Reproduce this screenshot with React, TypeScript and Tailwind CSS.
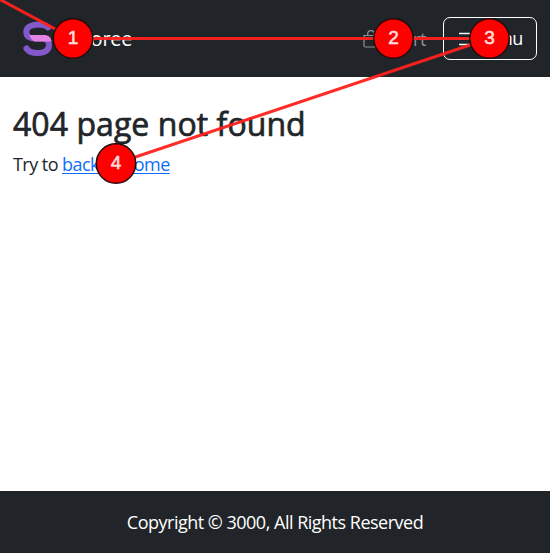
const stops = [
  { n: 1, x: 73, y: 38.5 },
  { n: 2, x: 393.5, y: 38.5 },
  { n: 3, x: 489.5, y: 38.5 },
  { n: 4, x: 116, y: 163.5 },
];

function Logo() {
  return (
    <svg width="32" height="36" viewBox="0 0 32 36" fill="none" className="mt-px shrink-0">
      <path d="M26 6.500C24 4 20 3.500 16 3.500C9 3.500 4.300 6.500 4.300 11C4.300 15.500 8 17.500 12 17.500H20C25 17.500 27 20 27 24C27 29 23 32 16 32C10 32 6.500 30.500 4.500 27.500" stroke="#8258ca" strokeWidth="6" strokeLinecap="round" />
      <path d="M7.500 14H22C26 14 29 16 29.500 20.500H14C11 20.500 8.500 18 7.500 14Z" fill="#e583e5" />
    </svg>
  );
}

function Header() {
  return (
    <header className="flex h-[77px] shrink-0 items-center bg-[#212529] pl-[22px] pr-[13px] text-white">
      <Logo />
      <span className="ml-[19px] text-[20px] leading-[30px] tracking-[-0.25px]">Storee</span>
      <div className="ml-auto flex items-center text-[#909294]">
        <svg width="16" height="18" viewBox="0 0 16 18" fill="none" stroke="currentColor" strokeWidth="1.200">
          <path d="M1 5.500H15V15.500Q15 17 13.500 17H2.500Q1 17 1 15.500ZM4.700 5.500V4a3.300 3.300 0 0 1 6.600 0V5.500" />
        </svg>
        <span className="ml-[13px] mt-0.5 text-[18px] leading-[27px] tracking-[-0.4px]">Cart</span>
      </div>
      <button className="ml-[17px] flex h-[43px] w-[94px] items-center justify-end rounded-[7px] border border-white pr-[13px] text-[18px] leading-[27px] tracking-[-0.4px]">
        <svg width="16" height="14" viewBox="0 0 16 14" stroke="currentColor" strokeWidth="1.300" className="mr-px shrink-0">
          <path d="M0 1.500H16M0 7H16M0 12.500H16" />
        </svg>
        Menu
      </button>
    </header>
  );
}

function ClickTrail() {
  return (
    <svg className="pointer-events-none absolute inset-0" width="550" height="553" viewBox="0 0 550 553">
      <polyline points="-1,-1 73,38.5 393.5,38.5 489.5,38.5 116,163.5" fill="none" stroke="#ff211c" strokeWidth="3" strokeOpacity="0.95" />
      {stops.map(({ n, x, y }) => (
        <g key={n}>
          <circle cx={x} cy={y} r="19.700" fill="#ff0000" stroke="#260b0d" strokeWidth="1.500" />
          <text x={x} y={y + 5.3} textAnchor="middle" fill="#ffe0e0" stroke="#ffe0e0" strokeWidth="0.500" className="font-['Liberation_Sans',sans-serif] text-[19px]">{n}</text>
        </g>
      ))}
    </svg>
  );
}

export default function App() {
  return (
    <div className="relative flex h-[553px] w-[550px] flex-col overflow-hidden bg-white font-['Open_Sans','Noto_Sans',sans-serif] text-[#212529]">
      <Header />
      <main className="flex-1 px-[13px] pt-[27px]">
        <h1 className="whitespace-nowrap text-[32px] font-medium leading-[40px] tracking-[0.06px] [-webkit-text-stroke:0.7px_#212529]">404 page not found</h1>
        <p className="mt-[7px] text-[18px] leading-[27px] tracking-[-0.55px]">
          Try to <a href="#home" className="text-[#0d6efd] underline decoration-1 underline-offset-2">back to home</a>
        </p>
      </main>
      <footer className="flex h-[62px] shrink-0 items-center justify-center bg-[#212529] pt-px text-[18px] leading-[27px] tracking-[-0.5px] text-white">
        Copyright © 3000, All Rights Reserved
      </footer>
      <ClickTrail />
    </div>
  );
}
